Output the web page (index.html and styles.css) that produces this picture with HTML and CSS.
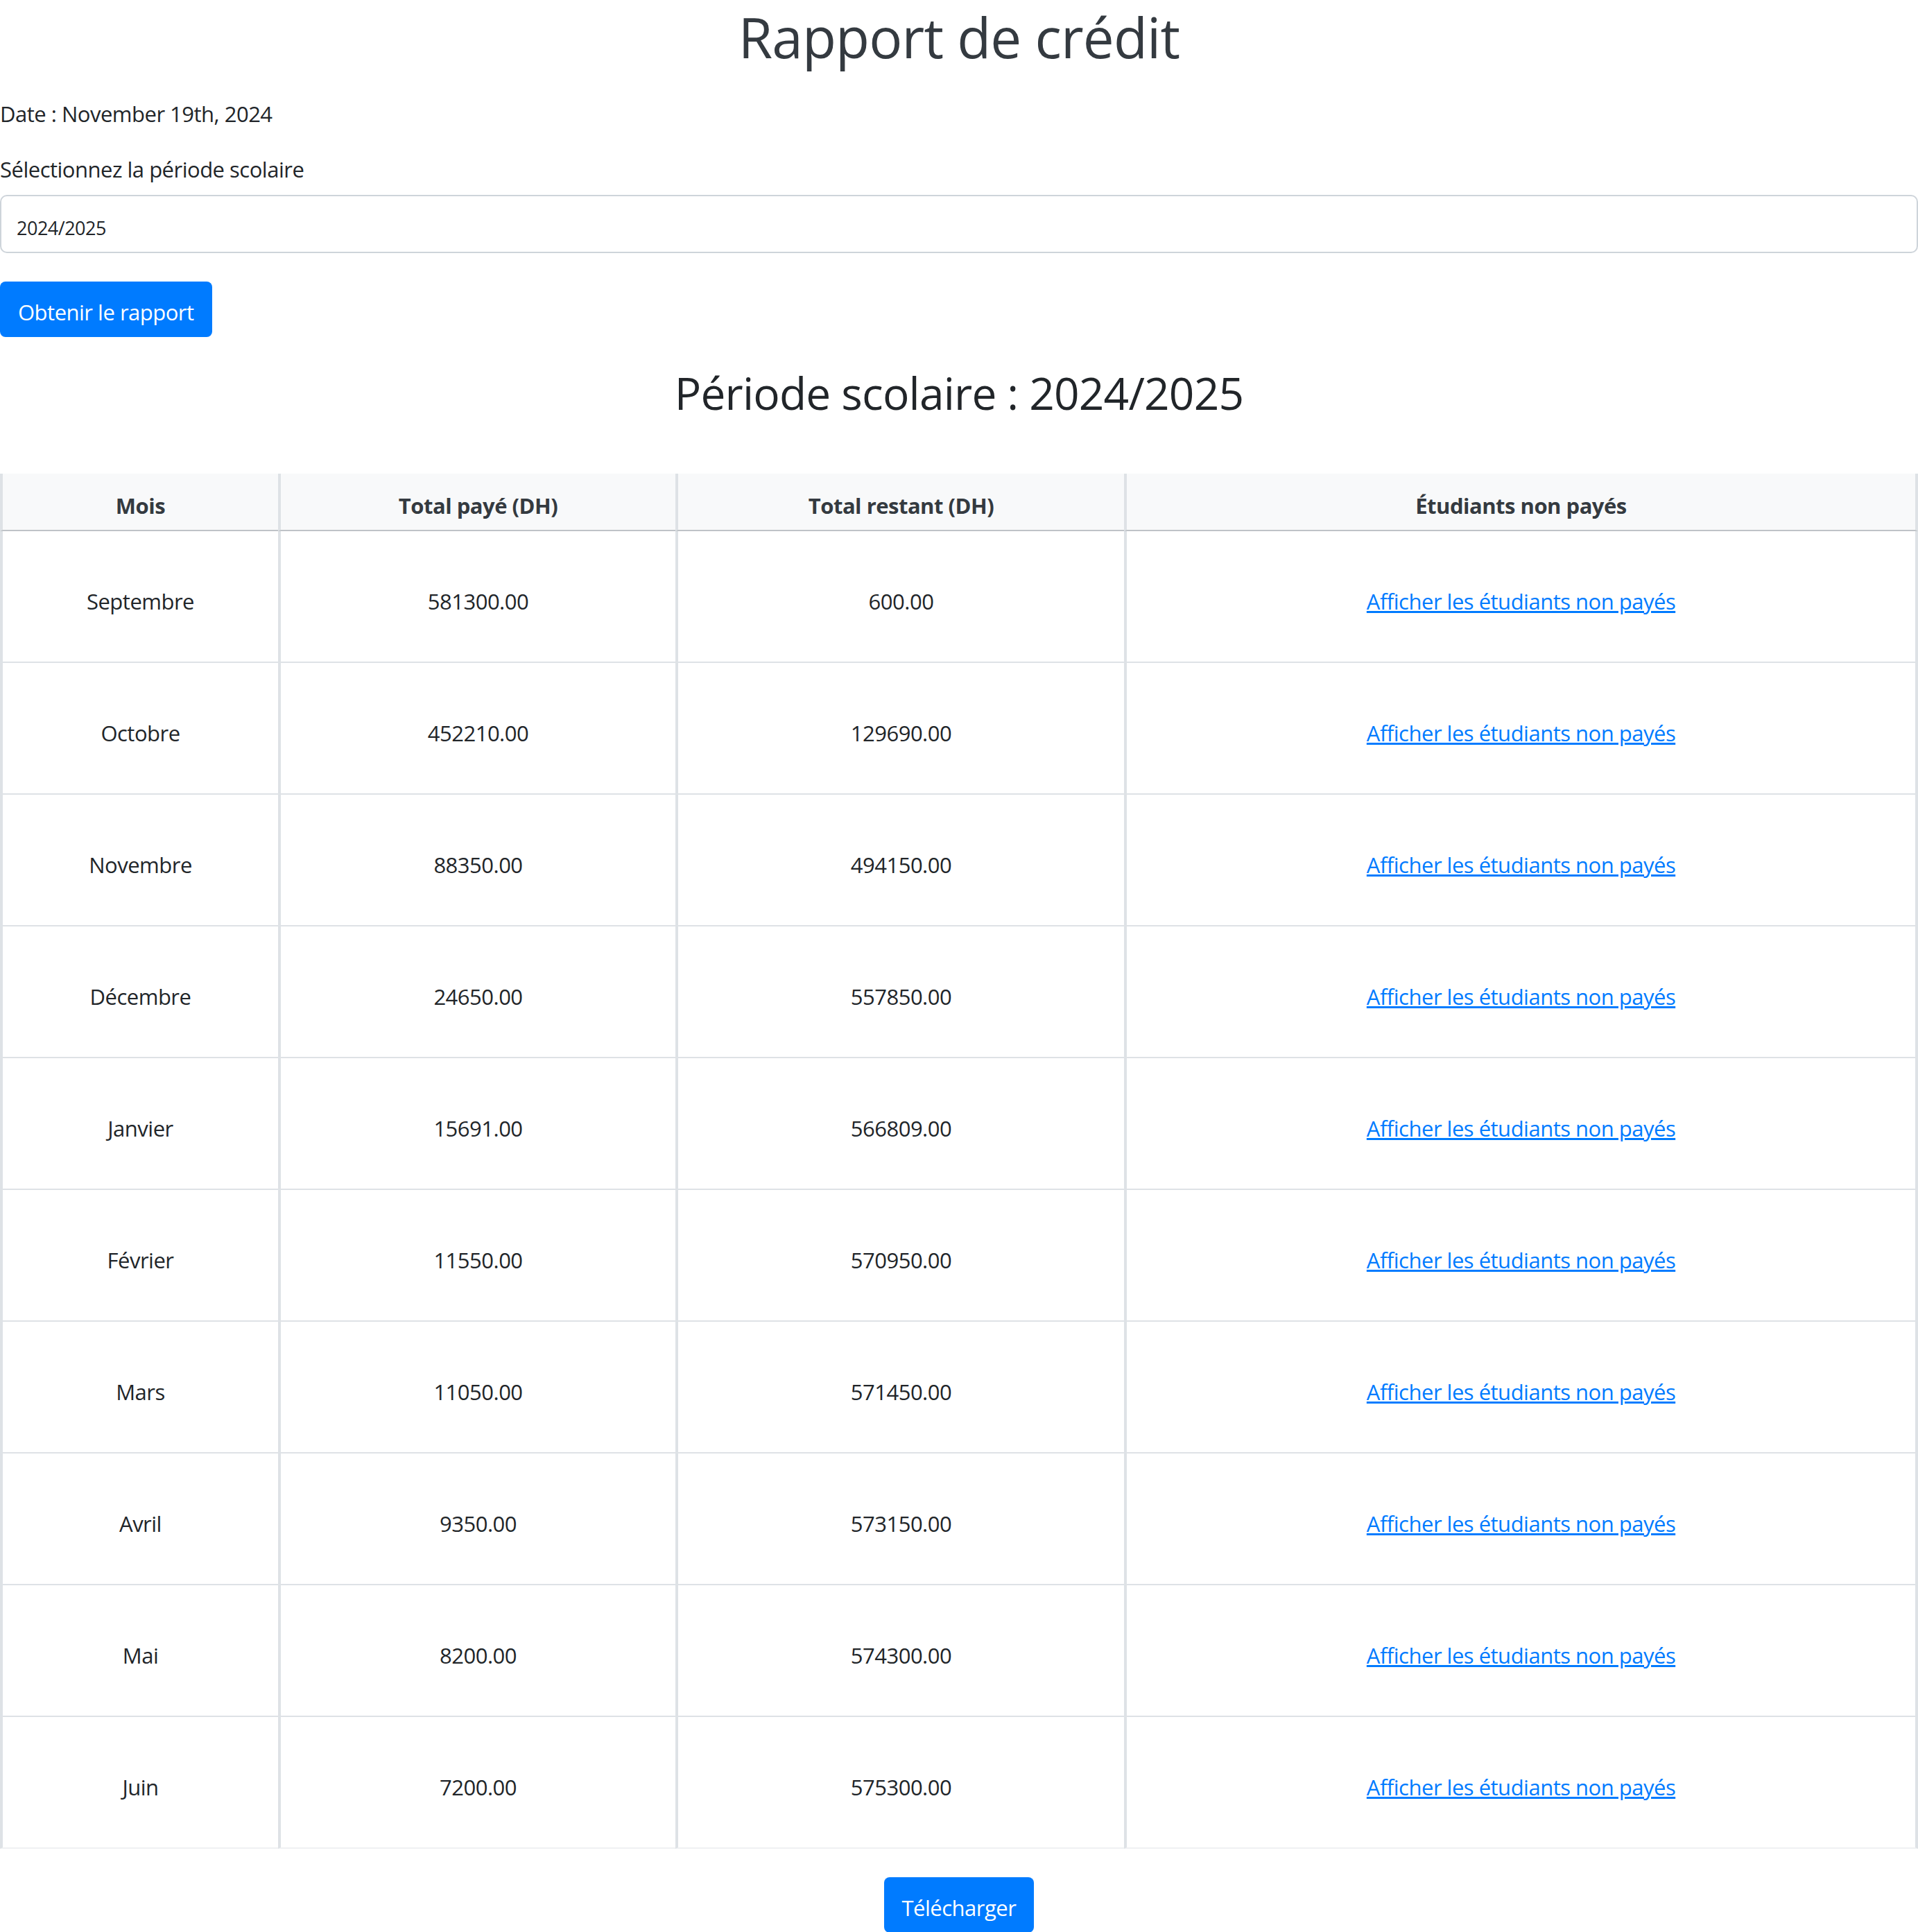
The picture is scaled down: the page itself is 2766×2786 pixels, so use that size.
FILE: index.html
```html
<!DOCTYPE html>
<html lang="fr">
<head>
<meta charset="utf-8">
<title>Rapport de crédit</title>
<link rel="stylesheet" href="styles.css">
</head>
<body>
<main class="page">
  <h1 class="title">Rapport de crédit</h1>
  <p class="date">Date : November 19th, 2024</p>
  <label class="label">Sélectionnez la période scolaire</label>
  <div class="select">2024/2025</div>
  <div class="actions"><button class="btn">Obtenir le rapport</button></div>
  <h2 class="period">Période scolaire : 2024/2025</h2>
  <table class="report">
    <colgroup>
      <col class="c1"><col class="c2"><col class="c3"><col class="c4">
    </colgroup>
    <thead>
      <tr><th>Mois</th><th>Total payé (DH)</th><th>Total restant (DH)</th><th>Étudiants non payés</th></tr>
    </thead>
    <tbody>
      <tr><td>Septembre</td><td>581300.00</td><td>600.00</td><td><a href="#">Afficher les étudiants non payés</a></td></tr>
      <tr><td>Octobre</td><td>452210.00</td><td>129690.00</td><td><a href="#">Afficher les étudiants non payés</a></td></tr>
      <tr><td>Novembre</td><td>88350.00</td><td>494150.00</td><td><a href="#">Afficher les étudiants non payés</a></td></tr>
      <tr><td>Décembre</td><td>24650.00</td><td>557850.00</td><td><a href="#">Afficher les étudiants non payés</a></td></tr>
      <tr><td>Janvier</td><td>15691.00</td><td>566809.00</td><td><a href="#">Afficher les étudiants non payés</a></td></tr>
      <tr><td>Février</td><td>11550.00</td><td>570950.00</td><td><a href="#">Afficher les étudiants non payés</a></td></tr>
      <tr><td>Mars</td><td>11050.00</td><td>571450.00</td><td><a href="#">Afficher les étudiants non payés</a></td></tr>
      <tr><td>Avril</td><td>9350.00</td><td>573150.00</td><td><a href="#">Afficher les étudiants non payés</a></td></tr>
      <tr><td>Mai</td><td>8200.00</td><td>574300.00</td><td><a href="#">Afficher les étudiants non payés</a></td></tr>
      <tr class="last"><td>Juin</td><td>7200.00</td><td>575300.00</td><td><a href="#">Afficher les étudiants non payés</a></td></tr>
    </tbody>
  </table>
  <div class="download"><button class="btn">Télécharger</button></div>
</main>
</body>
</html>
```
FILE: styles.css
```css
html, body {
  margin: 0;
  padding: 0;
  background: #ffffff;
}
body {
  font-family: "Open Sans", "Noto Sans", "Liberation Sans", sans-serif;
  font-size: 31px;
  line-height: 48px;
  letter-spacing: -0.5px;
  color: #212529;
}
.page {
  width: 2766px;
}
.title {
  margin: 0;
  padding-top: 5px;
  font-size: 80px;
  line-height: 96px;
  font-weight: 400;
  letter-spacing: -0.8px;
  color: #343a40;
  text-align: center;
}
.date {
  margin: 39px 0 0;
}
.label {
  display: block;
  margin-top: 32px;
}
.select {
  box-sizing: border-box;
  margin-top: 13px;
  height: 84px;
  border: 2px solid #ced4da;
  border-radius: 10px;
  padding: 26px 22px 0;
  font-size: 27px;
  line-height: 40px;
  color: #212529;
}
.actions {
  margin-top: 41px;
}
.btn {
  box-sizing: border-box;
  display: inline-block;
  height: 80px;
  margin: 0;
  padding: 20px 26px 12px;
  border: 0;
  border-radius: 8px;
  background: #007bff;
  color: #ffffff;
  font-family: inherit;
  font-size: 31px;
  line-height: 48px;
  letter-spacing: -0.5px;
  font-weight: 400;
  cursor: pointer;
}
.period {
  margin: 42px 0 0;
  font-size: 64px;
  line-height: 77px;
  font-weight: 400;
  letter-spacing: -0.8px;
  color: #212529;
  text-align: center;
}
.report {
  margin-top: 78px;
  width: 2766px;
  table-layout: fixed;
  border-collapse: separate;
  border-spacing: 0;
}
.c1 { width: 401px; }
.c2 { width: 573px; }
.c3 { width: 647px; }
.c4 { width: 1145px; }
.report th,
.report td {
  text-align: center;
  border-left: 4px solid #dee2e6;
  line-height: 48px;
}
.report th:last-child,
.report td:last-child {
  border-right: 4px solid #dee2e6;
}
.report th {
  background: #f8f9fa;
  color: #343a40;
  font-weight: 700;
  padding: 22px 0 11px;
  border-bottom: 2px solid #bfc3c7;
}
.report td {
  padding: 77px 0 63px;
  border-bottom: 2px solid #dee2e6;
}
.report tr.last td {
  border-bottom-color: #eff1f3;
}
.report a {
  color: #007bff;
  text-decoration: underline;
}
.download {
  margin-top: 41px;
  text-align: center;
}
```
